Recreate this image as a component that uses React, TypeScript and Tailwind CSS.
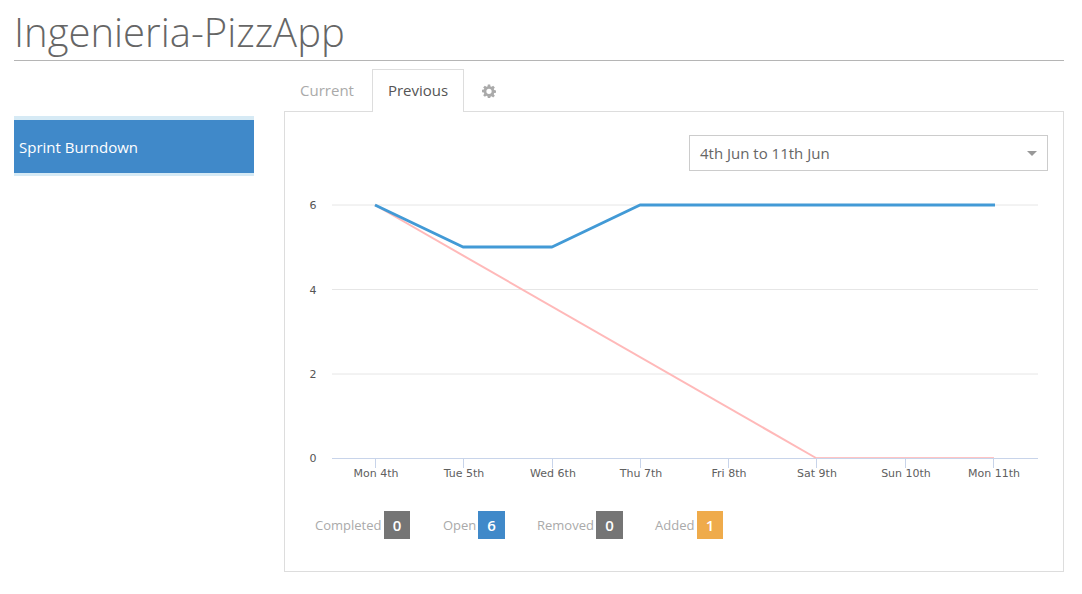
const days = [
  { x: 375.5, label: 'Mon 4th' },
  { x: 463.5, label: 'Tue 5th' },
  { x: 552.5, label: 'Wed 6th' },
  { x: 640.5, label: 'Thu 7th' },
  { x: 728.5, label: 'Fri 8th' },
  { x: 816.5, label: 'Sat 9th' },
  { x: 905.5, label: 'Sun 10th' },
  { x: 993.5, label: 'Mon 11th' },
];

const yTicks = [
  { y: 205, label: '6' },
  { y: 289.5, label: '4' },
  { y: 374, label: '2' },
];

function BurndownChart() {
  // svg sits at page x=285, y=185
  return (
    <svg width="778" height="300" viewBox="285 185 778 300" className="block">
      {yTicks.map((t) => (
        <g key={t.label}>
          <line x1="332" x2="1038" y1={t.y} y2={t.y} stroke="#e6e6e6" strokeWidth="1" />
          <text x="313" y={t.y + 4} textAnchor="middle" fontSize="11" fill="#555" fontFamily="'DejaVu Sans', sans-serif">
            {t.label}
          </text>
        </g>
      ))}
      <text x="313" y="462" textAnchor="middle" fontSize="11" fill="#555" fontFamily="'DejaVu Sans', sans-serif">
        0
      </text>
      <line x1="332" x2="1038" y1="458.5" y2="458.5" stroke="#c8d4ea" strokeWidth="1" />
      {days.map((d) => (
        <g key={d.label}>
          <line x1={d.x} x2={d.x} y1="458" y2="468" stroke="#c8d4ea" strokeWidth="1" />
          <text x={d.x + 0.5} y="477" textAnchor="middle" fontSize="11" fill="#606060" fontFamily="'DejaVu Sans', sans-serif">
            {d.label}
          </text>
        </g>
      ))}
      <polyline points="375,205 816,458" fill="none" stroke="#ffb9b9" strokeWidth="2" />
      <line x1="816" x2="994" y1="457.5" y2="457.5" stroke="#ffc4c4" strokeWidth="1" />
      <polyline points="375,205 463,247 552,247 640,205 995,205" fill="none" stroke="#429ad6" strokeWidth="3" strokeLinejoin="round" />
    </svg>
  );
}

function Stat({ label, value, color, labelClass, badgeClass }: { label: string; value: number; color: string; labelClass: string; badgeClass: string }) {
  return (
    <div className="flex items-center">
      <span className={`text-[13px] text-[#aaaaaa] whitespace-nowrap pt-[2px] ${labelClass}`}>{label}</span>
      <span className={`${color} ${badgeClass} h-[28px] flex items-center justify-center text-white font-semibold text-[15px]`}>{value}</span>
    </div>
  );
}

export default function App() {
  return (
    <div className="w-[1082px] h-[594px] bg-white overflow-hidden px-[14px] pt-[5px] font-['Open_Sans',sans-serif] text-[#555555]">
      <div className="border-b border-[#b5b5b5] h-[56px] mr-[4px]">
        <h1 className="text-[40px] font-light leading-[54px] text-[#666666]">Ingenieria-PizzApp</h1>
      </div>
      <div className="flex mt-[8px]">
        <div className="w-[240px] mt-[47px] shrink-0">
          <div className="bg-[#4089c9] border-t-4 border-b-[3px] border-[#d6eaf5] bg-clip-padding h-[60px] flex items-center pl-[5px] pt-[1px] text-white text-[15px]">
            Sprint Burndown
          </div>
        </div>
        <div className="w-[780px] ml-[30px]">
          <div className="flex items-end h-[43px] relative z-10">
            <div className="w-[86px] mr-[2px] h-[43px] flex items-center justify-center pb-[1px] text-[15px] text-[#aaaaaa]">Current</div>
            <div className="w-[92px] h-[43px] flex items-center justify-center pb-[2px] text-[15px] text-[#555555] bg-white border border-b-0 border-[#dddddd]">
              Previous
            </div>
            <div className="h-[43px] flex items-center pl-[18px]">
              <svg width="14" height="14" viewBox="0 0 24 24" fill="#aaaaaa">
                <path fillRule="evenodd" d="M10 1h4l.6 3.1 1.9.8L19.1 3l2.9 2.9-1.9 2.6.8 1.9L24 11v4l-3.1.6-.8 1.9 1.9 2.6-2.9 2.9-2.6-1.9-1.9.8L14 24h-4l-.6-3.1-1.9-.8L4.900 22 2 19.100l1.900-2.600-.8-1.900L0 14v-4l3.100-.6.8-1.900L2 5.900 4.900 3l2.600 1.900 1.900-.8L10 1zm2 7a4.500 4.500 0 1 0 0 9 4.500 4.500 0 0 0 0-9z" />
              </svg>
            </div>
          </div>
          <div className="border border-[#dddddd] h-[461px] -mt-px">
            <div className="flex justify-end pt-[23px] pr-[15px]">
              <div className="w-[359px] h-[36px] border border-[#cccccc] flex items-center justify-between pl-[10px] pr-[10px] text-[15px] text-[#666666]">
                <span>4th Jun to 11th Jun</span>
                <span className="w-0 h-0 border-x-[5px] border-x-transparent border-t-[5px] border-t-[#999999]" />
              </div>
            </div>
            <div className="mt-[14px]">
              <BurndownChart />
            </div>
            <div className="flex items-center gap-[32px] pl-[30px] mt-[26px]">
              <Stat label="Completed" value={0} color="bg-[#757575]" labelClass="w-[69px]" badgeClass="w-[26px] mr-[1px]" />
              <Stat label="Open" value={6} color="bg-[#4089c9]" labelClass="w-[35px]" badgeClass="w-[27px]" />
              <Stat label="Removed" value={0} color="bg-[#757575]" labelClass="w-[59px]" badgeClass="w-[27px]" />
              <Stat label="Added" value={1} color="bg-[#efab4b]" labelClass="w-[42px]" badgeClass="w-[26px]" />
            </div>
          </div>
        </div>
      </div>
    </div>
  );
}
